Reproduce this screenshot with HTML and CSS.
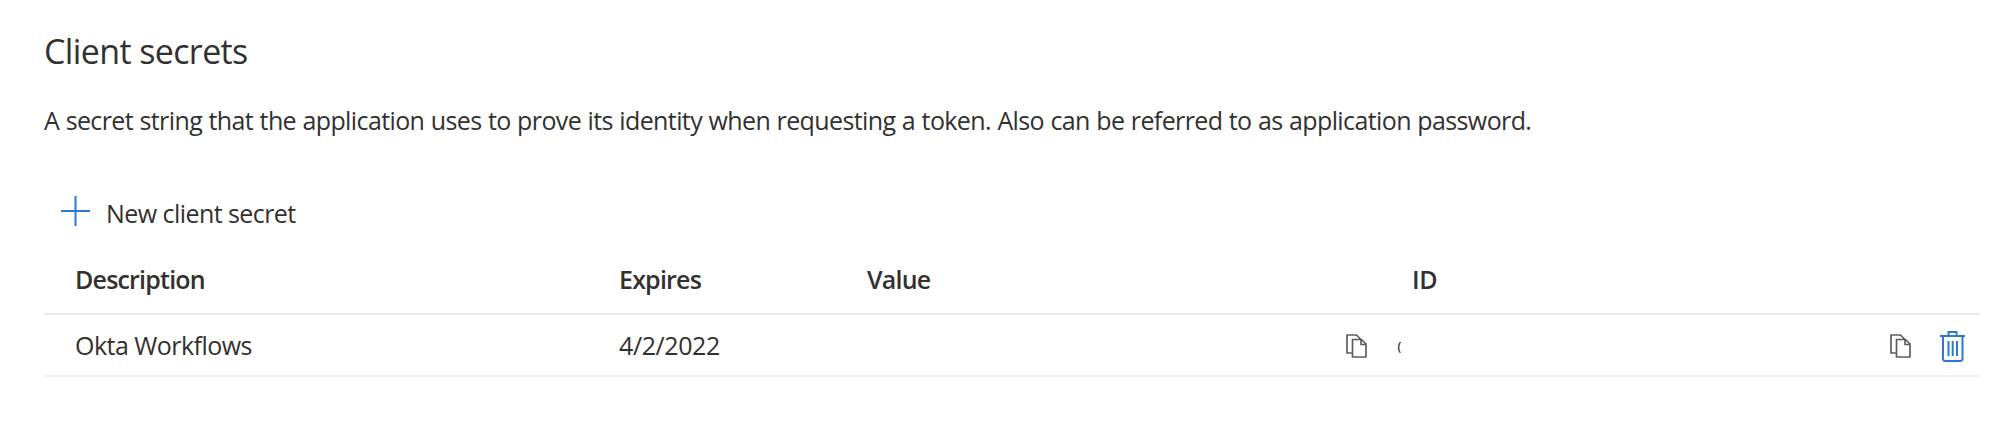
FILE: index.html
```html
<!DOCTYPE html>
<html lang="en"><head><meta charset="utf-8"><title>Client secrets</title><link rel="stylesheet" href="styles.css"></head>
<body>
<main class="panel">
<h1 class="title">Client secrets</h1>
<p class="intro">A secret string that the application uses to prove its identity when requesting a token. Also can be referred to as application password.</p>
<button class="add"><svg class="plus" viewBox="0 0 30 30"><path d="M14.5 0V30M0 15H29"/></svg><span>New client secret</span></button>
<div class="row head"><span>Description</span><span>Expires</span><span>Value</span><span class="id">ID</span></div>
<div class="row item">
<span class="name">Okta Workflows</span><span class="date">4/2/2022</span>
<span class="value"><svg class="copy" viewBox="0 0 21 24"><path d="M6.5 19H1V1H10.500L15 5.5M6.500 5.500H15.500L20 10V23H6.500ZM15 5.500V10.500H20"/></svg></span>
<span class="idcell"><span class="mark">(</span><span class="actions"><svg class="copy" viewBox="0 0 21 24"><path d="M6.500 19H1V1H10.500L15 5.500M6.500 5.500H15.500L20 10V23H6.500ZM15 5.500V10.500H20"/></svg><svg class="trash" viewBox="0 0 25 31"><path d="M0 5H25M8.500 5V1H16.500V5M3 5V27.500Q3 30 5.500 30H20Q22.500 30 22.500 27.500V5M8.500 10V25M12.700 10V25M17 10V25"/></svg></span></span>
</div>
</main>
</body></html>
```
FILE: styles.css
```css
body{margin:0;font-family:"Open Sans","Noto Sans",sans-serif;color:#323130;background:#fff}
.panel{padding:28px 19px 0 44px}
.title{font-size:34px;line-height:46px;font-weight:400;letter-spacing:-.62px;margin:0}
.intro{font-size:25px;line-height:34px;letter-spacing:-.61px;word-spacing:.55px;margin:29px 0 58px}
.add{display:flex;align-items:flex-start;gap:15px;margin:0;padding:0 0 0 17px;border:0;background:none;color:inherit;font:25px/36px "Open Sans",sans-serif;letter-spacing:-.56px}
.plus{width:30px;height:30px;margin-top:1px;fill:none;stroke:#2f78d0;stroke-width:2}
.row{display:grid;grid-template-columns:544px 248px 530.5px 1fr;padding-left:31px;border-bottom:2px solid #ebebeb;font-size:25px}
.head{margin-top:27px;height:55px;line-height:42px;font-weight:600;letter-spacing:-.8px}
.id{padding-left:14.5px;letter-spacing:-.3px}
.item{height:60px;line-height:60px;align-items:center;border-color:#f1f1f1}
.name{letter-spacing:-.53px}
.date{letter-spacing:-.4px}
.value{display:flex;justify-content:flex-end;padding:2px 31px 0 0}
.copy{width:21px;height:24px;fill:none;stroke:#605e5c;stroke-width:1.7}
.idcell,.actions{display:flex;align-items:center}
.idcell{justify-content:space-between;padding-top:2px}
.actions{gap:29px;padding-right:15px}
.trash{width:25px;height:31px;fill:none;stroke:#2f78d0;stroke-width:2}
.mark{font-size:12px;line-height:20px;font-weight:600;padding-top:1px}
```
